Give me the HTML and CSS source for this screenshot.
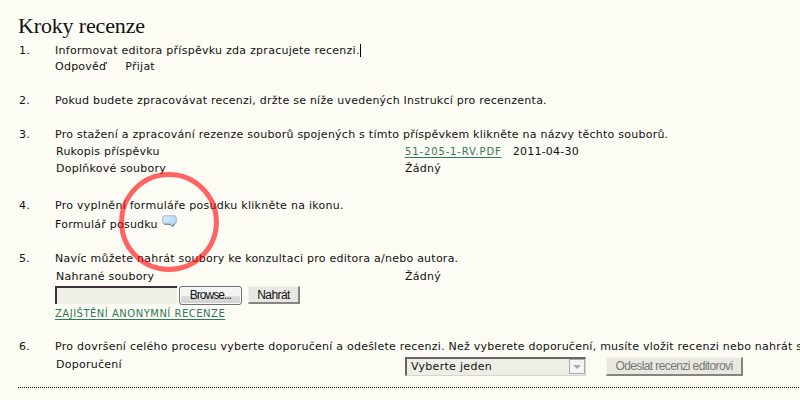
FILE: index.html
```
<!DOCTYPE html>
<html lang="cs">
<head>
<meta charset="utf-8">
<title>Kroky recenze</title>
<link rel="stylesheet" href="styles.css">
</head>
<body>
<main class="page">
<h1>Kroky recenze</h1>
<ol class="steps">
<li class="step s1"><span class="num">1.</span><div class="body">
<p class="line"><span class="t1">Informovat editora příspěvku zda zpracujete recenzi.</span><i class="caret"></i></p>
<p class="line answer"><span>Odpověď</span><span>Přijat</span></p></div></li>
<li class="step s2"><span class="num">2.</span><div class="body">
<p class="line"><span class="t2">Pokud budete zpracovávat recenzi, držte se níže uvedených Instrukcí pro recenzenta.</span></p></div></li>
<li class="step s3"><span class="num">3.</span><div class="body">
<p class="line"><span class="t3">Pro stažení a zpracování rezenze souborů spojených s tímto příspěvkem klikněte na názvy těchto souborů.</span></p>
<div class="line pair"><span class="label">Rukopis příspěvku</span><a class="file" href="#">51-205-1-RV.PDF</a><span class="date">2011-04-30</span></div>
<div class="line pair"><span class="label">Doplňkové soubory</span><span>Žádný</span></div></div></li>
<li class="step s4"><span class="num">4.</span><div class="body">
<p class="line"><span class="t4">Pro vyplnění formuláře posudku klikněte na ikonu.</span></p>
<p class="line form-line"><span>Formulář posudku</span>
<svg class="bubble" width="15" height="13" viewBox="0 0 15 13"><defs><linearGradient id="g" x2="1" y2="1"><stop stop-color="#dcefff"/><stop offset="1" stop-color="#a5cdf3"/></linearGradient></defs><path d="M3 .8H12Q14.3.8 14.3 3V6.8Q14.3 9 12 9H11.5L11 11.8 7.7 9H3Q.7 9 .7 6.8V3Q.7.8 3 .8Z" fill="url(#g)" stroke="#a3b4c9"/><path d="M2.5 9.3H8L10.8 11.8 11.6 9.3H12.8" fill="none" stroke="#74808f"/></svg>
<svg class="ring" width="102" height="102" viewBox="0 0 102 102"><circle cx="51" cy="51" r="47.4" fill="none" stroke="#ff0000" stroke-opacity=".6" stroke-width="5"/></svg></p></div></li>
<li class="step s5"><span class="num">5.</span><div class="body">
<p class="line"><span class="t5">Navíc můžete nahrát soubory ke konzultaci pro editora a/nebo autora.</span></p>
<div class="line pair"><span class="label">Nahrané soubory</span><span>Žádný</span></div>
<div class="upload"><input class="path" type="text" aria-label="Soubor"><button class="browse">Browse...</button><button class="classic">Nahrát</button></div>
<p class="line"><a class="anon" href="#">ZAJIŠTĚNÍ ANONYMNÍ RECENZE</a></p></div></li>
<li class="step s6"><span class="num">6.</span><div class="body">
<p class="line"><span class="t6">Pro dovršení celého procesu vyberte doporučení a odešlete recenzi. Než vyberete doporučení, musíte vložit recenzi nebo nahrát s</span></p>
<div class="decision"><span class="label">Doporučení</span><div class="select"><span>Vyberte jeden</span><span class="drop"><svg width="8" height="4" viewBox="0 0 8 4"><path d="M0 0H8L4 4Z" fill="#aaa"/></svg></span></div><button class="classic send" disabled>Odeslat recenzi editorovi</button></div></div></li>
</ol>
<div class="separator"></div>
</main>
</body>
</html>
```
FILE: styles.css
```
* { box-sizing: border-box; }
body {
  margin: 0;
  width: 800px;
  height: 400px;
  overflow: hidden;
  background: #fcfcf4;
  color: #111;
  font: 11px/16px "DejaVu Sans", Verdana, sans-serif;
  letter-spacing: .245px;
}
.page { padding: 13px 0 0 18px; }
h1 {
  margin: 0;
  height: 30px;
  font: 22px/25px "Liberation Serif", Georgia, serif;
  letter-spacing: -.15px;
}
.steps { list-style: none; margin: 0; padding: 0; }
.step { display: grid; grid-template-columns: 37px 1fr; white-space: nowrap; }
.num { padding-left: 1px; }
.line { display: flex; margin: 0; height: 16px; }
.s1 { height: 50px; }
.s2 { height: 34px; }
.s3 { height: 71px; }
.s4 { height: 53px; }
.s5 { height: 88px; }
.s6 { height: 48px; }
.t1, .t4 { letter-spacing: .265px; }
.caret { width: 1px; height: 13px; margin-top: 1px; background: #000; }
.answer { gap: 19px; }
.label { width: 350px; padding-left: 1px; flex: none; }
.s3 .pair { margin-top: 1px; }
.s5 .pair { margin-top: 2px; }
.date { margin-left: 11px; }
a { color: #2f7a55; font-size: 10px; text-decoration: underline; text-underline-offset: 2px; }
.file { letter-spacing: .87px; }
.anon { letter-spacing: .5px; }
.form-line { position: relative; margin-top: 3px; }
.bubble { margin-left: 4px; margin-top: -2px; }
.ring { position: absolute; left: 63px; top: -46px; }
.upload { display: flex; align-items: center; height: 20px; margin-bottom: 1px; }
button { padding: 0; color: #111; font: 12px/14px "Liberation Sans", Arial, sans-serif; letter-spacing: -.6px; white-space: nowrap; }
.path { width: 122px; height: 18px; padding: 0; background: #f0efe8; border: 0 solid #3a3236; border-width: 2px 0 0 2px; }
.browse { width: 63px; height: 19px; margin: 0 6px 0 2px; border: 1px solid #707070; border-radius: 3px; background: linear-gradient(#f3f3f3 50%, #dedede 51%, #d0d0d0); box-shadow: inset 0 0 0 1px #fafafa; letter-spacing: -.95px; }
.classic { width: 52px; height: 18px; border: solid; border-width: 1px 2px 2px 1px; border-color: #f4f3ed #868482 #868482 #f4f3ed; background: #e8e7e0; }
.decision { display: flex; height: 22px; margin-top: 2px; }
.select { display: flex; width: 181px; height: 19px; padding-left: 4px; border: solid; border-width: 2px 1px 1px 2px; border-color: #666 #d5d4cf #d5d4cf #666; background: #eeede6; letter-spacing: .3px; }
.drop { display: flex; align-items: center; justify-content: center; width: 16px; height: 15px; margin-left: auto; border: 1px solid #aaa; background: #f5f5f5; }
.send { width: 137px; height: 19px; margin-left: 20px; color: #777; }
.separator { width: 782px; height: 1px; background: repeating-linear-gradient(90deg, #000 0 1px, transparent 1px 2px); }
```
